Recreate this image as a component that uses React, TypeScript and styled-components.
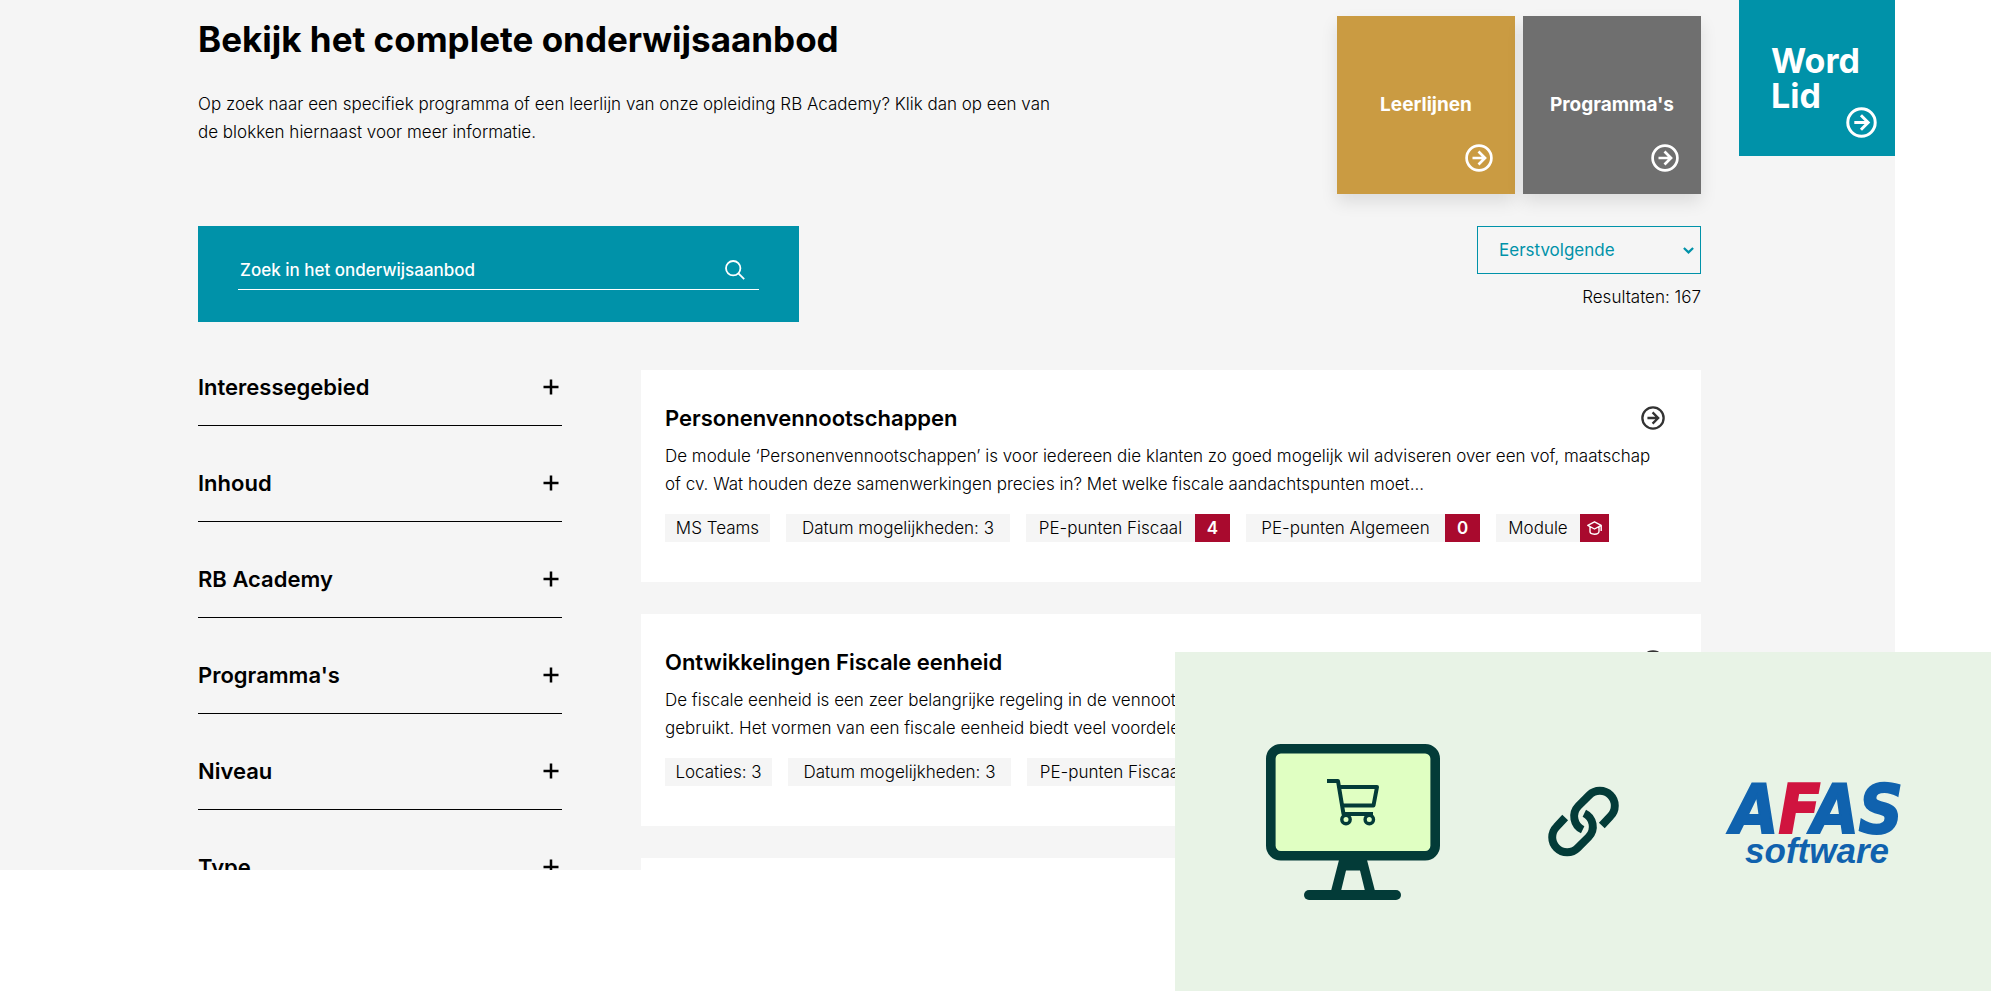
import React from "react";
import styled, { createGlobalStyle } from "styled-components";

const teal = "#0092a9";
const crimson = "#a90a2e";
const pine = "#033b38";
const paper = "#f5f5f5";

const GlobalStyle = createGlobalStyle`
  *, *::before, *::after { box-sizing: border-box; }
  body {
    margin: 0;
    background: #fff;
    color: #000;
    font-family: Inter, "Open Sans", sans-serif;
    font-size: 17px;
    font-weight: 300;
    line-height: 28px;
  }
  button, input, select { font: inherit; color: inherit; }
  h1, h2, p, ul { margin: 0; padding: 0; }
`;

const Screen = styled.div`
  position: relative;
  height: 100vh;
  overflow: hidden;
`;

const Site = styled.div`
  position: relative;
  margin-right: 96px;
  height: calc(100% - 121px);
  overflow: hidden;
  background: ${paper};
`;

const Content = styled.main`
  padding: 16px 194px 0 198px;
`;

const Intro = styled.section`
  display: flex;
  justify-content: space-between;
  gap: 32px;
`;

const IntroText = styled.div`
  max-width: 870px;
`;

const PageTitle = styled.h1`
  margin-bottom: 28px;
  font-size: 35px;
  font-weight: 700;
  line-height: 46px;
`;

const Tiles = styled.nav`
  display: flex;
  gap: 8px;
`;

const Tile = styled.a<{ $color: string }>`
  position: relative;
  display: flex;
  align-items: center;
  justify-content: center;
  width: 178px;
  height: 178px;
  background: ${(p) => p.$color};
  box-shadow: 0 8px 16px rgba(0, 0, 0, 0.1);
  color: #fff;
  font-size: 19px;
  font-weight: 700;
  text-decoration: none;

  svg {
    position: absolute;
    right: 22px;
    bottom: 22px;
  }
`;

const JoinLink = styled.a`
  position: absolute;
  top: 0;
  right: 0;
  width: 156px;
  height: 156px;
  padding: 43px 32px;
  background: ${teal};
  color: #fff;
  font-size: 34px;
  font-weight: 700;
  line-height: 35px;
  text-decoration: none;

  svg {
    position: absolute;
    right: 18px;
    bottom: 18px;
  }
`;

const Controls = styled.section`
  display: flex;
  justify-content: space-between;
  align-items: flex-start;
  margin-top: 32px;
`;

const SearchForm = styled.form`
  flex: 0 0 40%;
  padding: 24px 40px 32px;
  background: ${teal};
`;

const SearchRow = styled.div`
  display: flex;
  align-items: center;
  height: 40px;
  padding-right: 14px;
  border-bottom: 1px solid #fff;
  color: #fff;
`;

const SearchInput = styled.input`
  flex: 1;
  min-width: 0;
  padding: 0 2px;
  border: 0;
  outline: 0;
  background: transparent;
  font-weight: 500;

  &::placeholder { color: #fff; opacity: 1; }
`;

const IconButton = styled.button`
  display: flex;
  padding: 0;
  border: 0;
  background: none;
  cursor: pointer;
`;

const Sorting = styled.div`
  width: 224px;
  text-align: right;
`;

const SelectBox = styled.div`
  position: relative;
  margin-bottom: 9px;
  color: ${teal};

  svg {
    position: absolute;
    top: 21px;
    right: 7px;
    pointer-events: none;
  }
`;

const Select = styled.select`
  display: block;
  width: 100%;
  height: 48px;
  padding: 0 21px;
  border: 1px solid ${teal};
  border-radius: 0;
  appearance: none;
  background: transparent;
  font-weight: 400;
`;

const Columns = styled.div`
  display: grid;
  grid-template-columns: 364px 1fr;
  gap: 79px;
  align-items: start;
  margin-top: 48px;
`;

const Filters = styled.aside`
  display: flex;
  flex-direction: column;
  gap: 40px;
`;

const FilterToggle = styled.button`
  display: flex;
  align-items: flex-start;
  justify-content: space-between;
  height: 56px;
  padding: 0 3px 0 0;
  border: 0;
  border-bottom: 1px solid #000;
  background: none;
  font-size: 22px;
  font-weight: 600;
  line-height: 34px;
  cursor: pointer;

  svg { margin-top: 9px; }
`;

const Results = styled.div`
  display: flex;
  flex-direction: column;
  gap: 32px;
`;

const Card = styled.article`
  padding: 32px 36px 40px 24px;
  background: #fff;
`;

const CardHead = styled.header`
  display: flex;
  align-items: center;
  justify-content: space-between;
  height: 32px;
  margin-bottom: 8px;
`;

const CardTitle = styled.h2`
  font-size: 22px;
  font-weight: 600;
`;

const CardLink = styled.a`
  display: flex;
  color: #333;
`;

const Tags = styled.ul`
  display: flex;
  gap: 16px;
  margin-top: 16px;
  list-style: none;
`;

const Tag = styled.li`
  display: flex;
  height: 28px;
  background: ${paper};
`;

const TagLabel = styled.span<{ $min: number }>`
  min-width: ${(p) => p.$min}px;
  padding: 0 10px;
  text-align: center;
  white-space: nowrap;
`;

const TagBadge = styled.span<{ $width: number }>`
  display: flex;
  align-items: center;
  justify-content: center;
  width: ${(p) => p.$width}px;
  background: ${crimson};
  color: #fff;
  font-weight: 600;
`;

const Banner = styled.aside`
  position: absolute;
  right: 0;
  bottom: 0;
  display: flex;
  align-items: center;
  justify-content: space-between;
  width: 816px;
  height: 339px;
  padding: 0 88px 0 91px;
  background: #e8f3e6;
  color: ${pine};
`;

const AfasLogo = styled.div`
  width: 176px;
  padding: 6px 0 0 4px;
  color: #1062ae;
  font-style: italic;
  font-weight: 700;
  text-align: center;
  white-space: nowrap;
`;

const AfasName = styled.div`
  font-family: "DejaVu Sans Condensed", "DejaVu Sans", sans-serif;
  font-size: 68px;
  line-height: 52px;
  -webkit-text-stroke: 2px currentColor;

  span { color: #d0143f; }
`;

const AfasSub = styled.div`
  font-family: "Liberation Sans", sans-serif;
  font-size: 35px;
  line-height: 30px;
`;

const CircleArrow = ({ size, stroke = 2.7 }: { size: number; stroke?: number }) => (
  <svg width={size} height={size} viewBox="0 0 28 28" fill="none" stroke="currentColor" strokeWidth={stroke} aria-hidden>
    <circle cx="14" cy="14" r="12.4" />
    <path d="M7.5 14H20M13.5 7.5L20 14L13.5 20.5" />
  </svg>
);

const SearchIcon = () => (
  <svg width="20" height="20" viewBox="0 0 20 20" fill="none" stroke="currentColor" strokeWidth="1.8" aria-hidden>
    <circle cx="8.2" cy="8.2" r="7.2" />
    <path d="M13.4 13.4L19.2 19.2" />
  </svg>
);

const Chevron = () => (
  <svg width="11" height="7" viewBox="0 0 11 7" fill="none" stroke="currentColor" strokeWidth="2.2" aria-hidden>
    <path d="M0.9 1L5.5 5.4L10.1 1" />
  </svg>
);

const Plus = () => (
  <svg width="16" height="16" viewBox="0 0 16 16" fill="none" stroke="currentColor" strokeWidth="2.5" aria-hidden>
    <path d="M8 0.5V15.5M0.5 8H15.5" />
  </svg>
);

const GradCap = () => (
  <svg width="15" height="14" viewBox="0 0 15 14" fill="none" stroke="currentColor" strokeWidth="1.4" strokeLinejoin="round" aria-hidden>
    <path d="M7.5 0.8L14.2 4.4L7.5 8L0.8 4.4ZM3 5.8V10.6C3 12 4.5 13.2 7.5 13.2S12 12 12 10.6V5.8M14.2 4.4V10" />
  </svg>
);

const Monitor = () => (
  <svg width="174" height="156" viewBox="0 0 174 156" fill="none" stroke="currentColor" role="img" aria-label="Webshop">
    <rect x="4.8" y="4.8" width="164.4" height="107" rx="10" fill="#e0ffc2" strokeWidth="9.6" />
    <path d="M73 116H101L109 147H99L94 126.500H80L75 147H65Z" fill="currentColor" stroke="none" />
    <rect x="38" y="146" width="97" height="10" rx="5" fill="currentColor" stroke="none" />
    <path d="M61 37H72L77.500 70H107" strokeWidth="4" strokeLinejoin="round" />
    <path d="M73 43H111L107.500 61.500H76.500" strokeWidth="4" strokeLinejoin="round" />
    <circle cx="80" cy="75.500" r="4.200" strokeWidth="3.400" />
    <circle cx="103.300" cy="75.500" r="4.200" strokeWidth="3.400" />
  </svg>
);

const Chain = () => (
  <svg width="71" height="71" viewBox="23 19 215 214" fill="none" stroke="currentColor" strokeWidth="24" aria-hidden>
    <path d="M186 138L212 110A45 45 0 0 0 148 46L115 79A45 45 0 0 0 128 151" />
    <path d="M75 114L49 142A45 45 0 0 0 113 206L146 173A45 45 0 0 0 133 101" />
  </svg>
);

const filters = ["Interessegebied", "Inhoud", "RB Academy", "Programma's", "Niveau", "Type"];

type TagData = { label: string; min: number; badge?: React.ReactNode; badgeWidth?: number };

const courses: { title: string; text: string; tags: TagData[] }[] = [
  {
    title: "Personenvennootschappen",
    text: "De module ‘Personenvennootschappen’ is voor iedereen die klanten zo goed mogelijk wil adviseren over een vof, maatschap of cv. Wat houden deze samenwerkingen precies in? Met welke fiscale aandachtspunten moet...",
    tags: [
      { label: "MS Teams", min: 105 },
      { label: "Datum mogelijkheden: 3", min: 224 },
      { label: "PE-punten Fiscaal", min: 169, badge: "4", badgeWidth: 35 },
      { label: "PE-punten Algemeen", min: 199, badge: "0", badgeWidth: 35 },
      { label: "Module", min: 84, badge: <GradCap />, badgeWidth: 29 },
    ],
  },
  {
    title: "Ontwikkelingen Fiscale eenheid",
    text: "De fiscale eenheid is een zeer belangrijke regeling in de vennootschapsbelasting en wordt in de praktijk dan ook zeer veel gebruikt. Het vormen van een fiscale eenheid biedt veel voordelen...",
    tags: [
      { label: "Locaties: 3", min: 107 },
      { label: "Datum mogelijkheden: 3", min: 223 },
      { label: "PE-punten Fiscaal", min: 169, badge: "4", badgeWidth: 35 },
    ],
  },
  {
    title: "Actualiteiten",
    text: "",
    tags: [],
  },
];

export default function App() {
  return (
    <Screen>
      <GlobalStyle />
      <Site>
        <Content>
          <Intro>
            <IntroText>
              <PageTitle>Bekijk het complete onderwijsaanbod</PageTitle>
              <p>
                Op zoek naar een specifiek programma of een leerlijn van onze opleiding RB Academy? Klik dan op een van
                de blokken hiernaast voor meer informatie.
              </p>
            </IntroText>
            <Tiles aria-label="Aanbod">
              <Tile href="#leerlijnen" $color="#ca9b42">
                Leerlijnen
                <CircleArrow size={28} />
              </Tile>
              <Tile href="#programmas" $color="#6f6f6f">
                Programma's
                <CircleArrow size={28} />
              </Tile>
            </Tiles>
          </Intro>

          <Controls>
            <SearchForm role="search">
              <SearchRow>
                <SearchInput type="text" aria-label="Zoek in het onderwijsaanbod" placeholder="Zoek in het onderwijsaanbod" />
                <IconButton type="button" aria-label="Zoeken">
                  <SearchIcon />
                </IconButton>
              </SearchRow>
            </SearchForm>
            <Sorting>
              <SelectBox>
                <Select aria-label="Sorteren" defaultValue="next">
                  <option value="next">Eerstvolgende</option>
                </Select>
                <Chevron />
              </SelectBox>
              <p>Resultaten: 167</p>
            </Sorting>
          </Controls>

          <Columns>
            <Filters>
              {filters.map((name) => (
                <FilterToggle key={name} type="button" aria-expanded={false}>
                  {name}
                  <Plus />
                </FilterToggle>
              ))}
            </Filters>
            <Results>
              {courses.map((course) => (
                <Card key={course.title}>
                  <CardHead>
                    <CardTitle>{course.title}</CardTitle>
                    <CardLink href="#cursus" aria-label={course.title}>
                      <CircleArrow size={24} />
                    </CardLink>
                  </CardHead>
                  <p>{course.text}</p>
                  <Tags>
                    {course.tags.map((tag) => (
                      <Tag key={tag.label}>
                        <TagLabel $min={tag.min}>{tag.label}</TagLabel>
                        {tag.badge && <TagBadge $width={tag.badgeWidth ?? 35}>{tag.badge}</TagBadge>}
                      </Tag>
                    ))}
                  </Tags>
                </Card>
              ))}
            </Results>
          </Columns>
        </Content>
        <JoinLink href="#lid">
          Word
          <br />
          Lid
          <CircleArrow size={31} />
        </JoinLink>
      </Site>
      <Banner>
        <Monitor />
        <Chain />
        <AfasLogo>
          <AfasName>
            A<span>F</span>AS
          </AfasName>
          <AfasSub>software</AfasSub>
        </AfasLogo>
      </Banner>
    </Screen>
  );
}
